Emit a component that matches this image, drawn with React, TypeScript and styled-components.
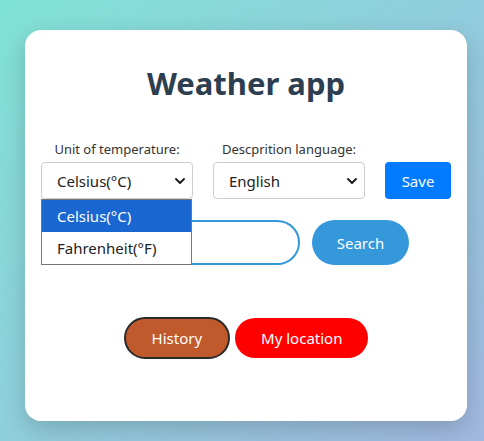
import React from "react";
import styled, { createGlobalStyle } from "styled-components";

const Global = createGlobalStyle`
  html, body { margin: 0; padding: 0; }
  body {
    width: 484px;
    height: 441px;
    overflow: hidden;
    background: linear-gradient(135deg, #80e2d6 0%, #8fd0dc 45%, #a2b8e0 100%);
    font-family: "Noto Sans", "Open Sans", sans-serif;
  }
`;

const Page = styled.div`
  padding: 30px 17px 20px 25px;
`;

const Card = styled.div`
  background: #fff;
  border-radius: 16px;
  height: 391px;
  box-sizing: border-box;
  padding-top: 33px;
  box-shadow: 0 8px 24px rgba(0, 0, 0, 0.18);
  display: flex;
  flex-direction: column;
  align-items: center;
`;

const Title = styled.h1`
  margin: 0 0 37px;
  font-size: 31px;
  font-weight: 700;
  line-height: 40px;
  color: #2c3e50;
`;

const Controls = styled.div`
  display: flex;
  align-items: flex-end;
  gap: 20px;
`;

const Field = styled.div`
  position: relative;
  display: flex;
  flex-direction: column;
  align-items: center;
  width: 152px;
`;

const Label = styled.label`
  font-size: 13px;
  line-height: 18px;
  color: #333;
  margin-bottom: 4px;
`;

const SelectBox = styled.div`
  box-sizing: border-box;
  width: 152px;
  height: 37px;
  border: 1px solid #ccc;
  border-radius: 4px;
  display: flex;
  align-items: center;
  justify-content: space-between;
  padding: 0 6px 0 15px;
  font-size: 15px;
  color: #222;
`;

const Chevron = styled.svg`
  width: 12px;
  height: 12px;
`;

const SaveButton = styled.button`
  height: 37px;
  width: 66px;
  border: none;
  border-radius: 4px;
  background: #007bff;
  color: #fff;
  font-family: inherit;
  font-size: 15px;
  padding: 0;
`;

const Menu = styled.ul`
  position: absolute;
  top: 59px;
  left: 0;
  width: 151px;
  margin: 0;
  padding: 0;
  list-style: none;
  background: #fff;
  border: 1px solid #767676;
  box-sizing: border-box;
  z-index: 2;
`;

const Option = styled.li<{ $active?: boolean }>`
  height: 32px;
  line-height: 32px;
  padding-left: 15px;
  font-size: 15px;
  background: ${(p) => (p.$active ? "#1a67d2" : "#fff")};
  color: ${(p) => (p.$active ? "#fff" : "#222")};
`;

const SearchRow = styled.div`
  display: flex;
  gap: 12px;
  margin-top: 21px;
  margin-left: -8px;
`;

const SearchInput = styled.input`
  box-sizing: border-box;
  width: 225px;
  height: 45px;
  border: 2px solid #3498db;
  border-radius: 23px;
  outline: none;
  font-family: inherit;
  font-size: 15px;
  padding: 0 16px;
`;

const SearchButton = styled.button`
  width: 97px;
  height: 45px;
  border: none;
  border-radius: 23px;
  background: #3498db;
  color: #fff;
  font-family: inherit;
  font-size: 15px;
`;

const Actions = styled.div`
  display: flex;
  align-items: center;
  gap: 5px;
  margin-top: 52px;
`;

const Pill = styled.button<{ $bg: string; $bordered?: boolean }>`
  box-sizing: border-box;
  height: ${(p) => (p.$bordered ? "42px" : "40px")};
  padding: 0 ${(p) => (p.$bordered ? "26px" : "26px")};
  border-radius: 21px;
  border: ${(p) => (p.$bordered ? "2px solid #2a2a2a" : "none")};
  background: ${(p) => p.$bg};
  color: #fff;
  font-family: inherit;
  font-size: 15px;
`;

const ChevronIcon = () => (
  <Chevron viewBox="0 0 12 12">
    <path d="M2 4 L6 8 L10 4" fill="none" stroke="#222" strokeWidth="2" strokeLinecap="round" strokeLinejoin="round" />
  </Chevron>
);

export default function App() {
  return (
    <>
      <Global />
      <Page>
        <Card>
          <Title>Weather app</Title>
          <Controls>
            <Field>
              <Label>Unit of temperature:</Label>
              <SelectBox>
                <span>Celsius(°C)</span>
                <ChevronIcon />
              </SelectBox>
              <Menu>
                <Option $active>Celsius(°C)</Option>
                <Option>Fahrenheit(°F)</Option>
              </Menu>
            </Field>
            <Field>
              <Label>Descprition language:</Label>
              <SelectBox>
                <span>English</span>
                <ChevronIcon />
              </SelectBox>
            </Field>
            <SaveButton>Save</SaveButton>
          </Controls>
          <SearchRow>
            <SearchInput />
            <SearchButton>Search</SearchButton>
          </SearchRow>
          <Actions>
            <Pill $bg="#c0592b" $bordered>History</Pill>
            <Pill $bg="#ff0000">My location</Pill>
          </Actions>
        </Card>
      </Page>
    </>
  );
}
